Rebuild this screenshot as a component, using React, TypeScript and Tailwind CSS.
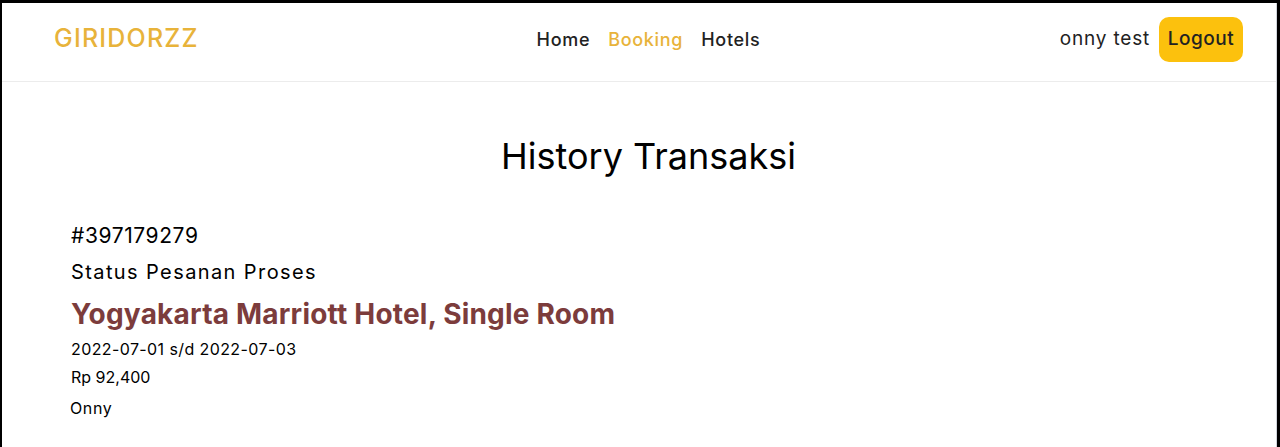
export default function App() {
  const font = { fontFamily: 'Inter, "Noto Sans", sans-serif' };
  return (
    <div className="w-[1280px] h-[447px] bg-black pt-[3px] pl-[2px] pr-[3px] overflow-hidden" style={font}>
      <div className="bg-white h-full border-r border-gray-300">
        <header className="grid grid-cols-[1fr_auto_1fr] items-center h-[79px] pb-[6px] pl-[52px] pr-[33px] border-b border-[#ececec]">
          <div className="text-[25px] font-medium text-[#e8b33a] tracking-[1.2px]">GIRIDORZZ</div>
          <nav className="flex items-center gap-[18px] text-[18px] font-medium text-[#222] tracking-[0.7px]">
            <span>Home</span>
            <span className="text-[#e8b33a]">Booking</span>
            <span>Hotels</span>
          </nav>
          <div className="flex items-center justify-end gap-[9px]">
            <span className="text-[19px] text-[#222] tracking-[0.8px]">onny test</span>
            <button className="bg-[#fcc10d] rounded-[10px] h-[45px] w-[84px] text-[19px] font-medium text-[#222] tracking-[0.5px]">Logout</button>
          </div>
        </header>
        <main className="pl-[52px] pr-[33px]">
          <h1 className="text-center text-[36px] text-black mt-[49px] leading-[50px]">History Transaksi</h1>
          <div className="mt-[41px] pl-[17px] text-black">
            <div className="text-[21px] leading-[28px] tracking-[0.6px]">#397179279</div>
            <div className="text-[20px] leading-[28px] mt-[8px] tracking-[1.4px]">Status Pesanan Proses</div>
            <div className="text-[28px] font-bold text-[#7c3c3c] leading-[36px] mt-[10px] tracking-[0.2px]">Yogyakarta Marriott Hotel, Single Room</div>
            <div className="text-[16px] leading-[24px] mt-[5px] tracking-[0.4px]">2022-07-01 s/d 2022-07-03</div>
            <div className="text-[16px] leading-[24px] mt-[4px]">Rp 92,400</div>
            <div className="text-[16px] leading-[24px] mt-[7px] -ml-[1px] tracking-[0.6px]">Onny</div>
          </div>
        </main>
      </div>
    </div>
  );
}
